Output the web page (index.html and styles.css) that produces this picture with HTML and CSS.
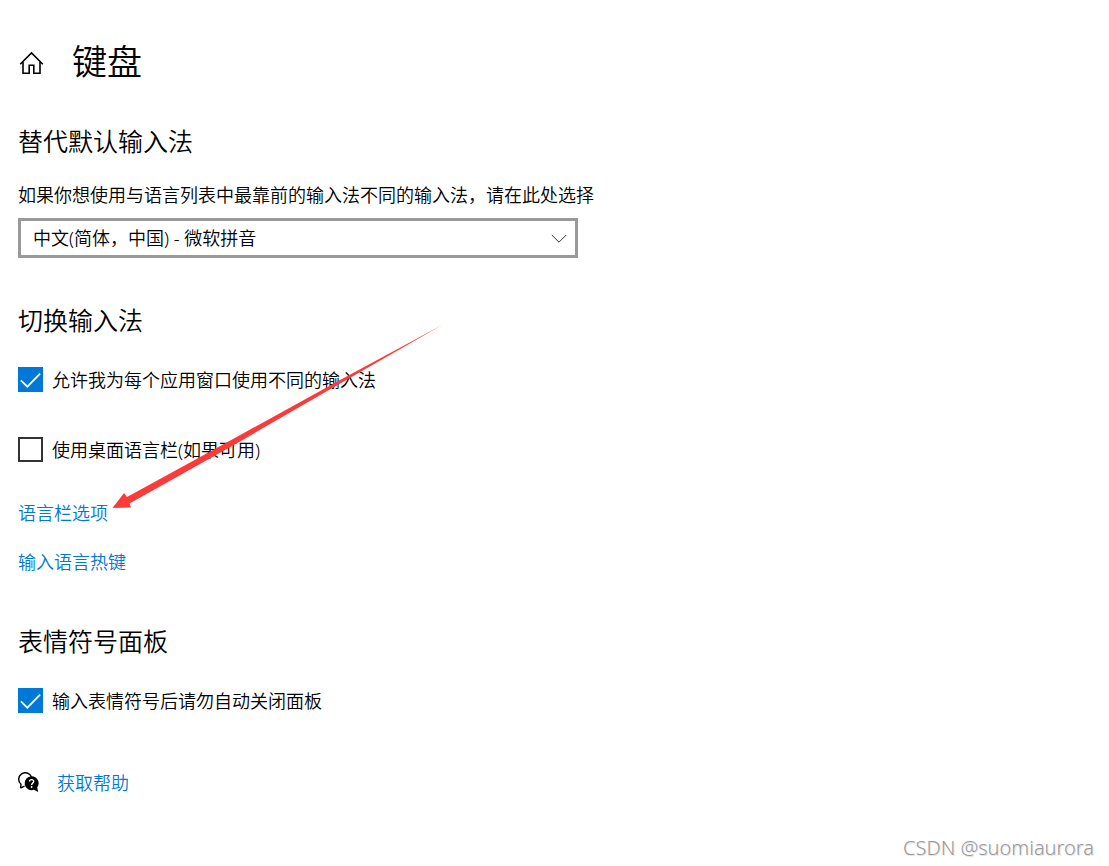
FILE: index.html
```html
<!DOCTYPE html>
<html lang="zh-CN">
<head>
    <meta charset="UTF-8">
    <meta name="viewport" content="width=device-width, initial-scale=1.0">
    <title>键盘</title>
    <link rel="stylesheet" href="styles.css">
</head>
<body>
    <header class="page-header">
        <a class="home" href="#" aria-label="主页">
            <svg width="26" height="26" viewBox="0 0 26 26" fill="none" stroke="#000" stroke-width="1.6">
                <path d="M2.2 15.200 13.500 4l11.300 11.200"/>
                <path d="M5 13v11.200h6.200v-8h4.600v8H22V13"/>
            </svg>
        </a>
        <h1>键盘</h1>
    </header>

    <main>
        <section>
            <h2>替代默认输入法</h2>
            <label class="description" for="ime">如果你想使用与语言列表中最靠前的输入法不同的输入法，请在此处选择</label>
            <div class="dropdown">
                <select id="ime">
                    <option>中文(简体，中国) - 微软拼音</option>
                </select>
                <svg class="chevron" width="16" height="10" viewBox="0 0 16 10" fill="none" stroke="#333">
                    <path d="M.8 1 8 8.200 15.200 1"/>
                </svg>
            </div>
        </section>

        <section class="switching">
            <h2>切换输入法</h2>
            <label class="check">
                <input type="checkbox" checked>
                <svg class="tick" viewBox="0 0 26 26" fill="none" stroke="#fff" stroke-width="1.8">
                    <path d="M3 14 9.700 20.500 23 7"/>
                </svg>
                <span>允许我为每个应用窗口使用不同的输入法</span>
            </label>
            <label class="check">
                <input type="checkbox">
                <svg class="tick" viewBox="0 0 26 26" fill="none" stroke="#fff" stroke-width="1.8">
                    <path d="M3 14 9.700 20.500 23 7"/>
                </svg>
                <span>使用桌面语言栏(如果可用)</span>
            </label>
            <div class="links">
                <a href="#">语言栏选项</a>
                <a href="#">输入语言热键</a>
            </div>
            <!-- 指向"语言栏选项"的箭头 -->
            <svg class="arrow" width="332" height="186" viewBox="0 0 332 186">
                <path d="M.5 184 12 169 15 173 121 115 229 55.500 331 .5 229 59 121 121.500 17.500 179.500 19 183.500Z" fill="#fb3b3a"/>
            </svg>
        </section>

        <section>
            <h2>表情符号面板</h2>
            <label class="check">
                <input type="checkbox" checked>
                <svg class="tick" viewBox="0 0 26 26" fill="none" stroke="#fff" stroke-width="1.8">
                    <path d="M3 14 9.700 20.500 23 7"/>
                </svg>
                <span>输入表情符号后请勿自动关闭面板</span>
            </label>
        </section>

        <div class="help">
            <svg width="22" height="22" viewBox="0 0 22 22">
                <path d="M2.500 16 3 12.300A6.600 6.600 0 1 1 13.500 5" fill="none" stroke="#000" stroke-width="1.400"/>
                <path d="M2.500 16 6.500 14.200" stroke="#000" stroke-width="1.400"/>
                <path d="M13.500 4.200a7 7 0 0 1 5.700 11.200l1 4.600-4.300-2.200A7 7 0 1 1 13.500 4.200Z" fill="#000"/>
                <path d="M11.500 9.600c0-2.600 4.200-2.600 4.200 0 0 1.500-2.100 1.600-2.100 3.300" fill="none" stroke="#fff" stroke-width="1.400"/>
                <circle cx="13.600" cy="15" r=".9" fill="#fff"/>
            </svg>
            <a href="#">获取帮助</a>
        </div>
    </main>

    <footer class="watermark">CSDN @suomiaurora</footer>
</body>
</html>
```
FILE: styles.css
```css
* {
    box-sizing: border-box;
}
body {
    display: flex;
    flex-direction: column;
    min-height: 100vh;
    margin: 0;
    padding: 36px 15px 4px 18px;
    background: #fff;
    color: #000;
    font-family: "Noto Sans", "Noto Sans CJK SC", sans-serif;
    font-size: 18px;
    font-weight: 350;
    line-height: 24px;
}
h1, h2 {
    margin: 0;
    font-weight: 350;
}
h1 {
    font-size: 35px;
    line-height: 52px;
}
h2 {
    margin-bottom: 30px;
    font-size: 25px;
    line-height: 34px;
}
a {
    color: #0078d7;
    text-decoration: none;
}
.page-header {
    display: flex;
    align-items: center;
    gap: 28px;
    margin-bottom: 36px;
}
.home {
    display: flex;
}
section {
    display: flex;
    flex-direction: column;
    align-items: flex-start;
    margin-bottom: 45px;
}
.description {
    margin: -5px 0 11px;
}
.dropdown {
    position: relative;
    width: 100%;
    max-width: 560px;
}
.dropdown select {
    appearance: none;
    width: 100%;
    height: 40px;
    padding: 0 36px 0 12px;
    border: 3px solid #999;
    border-radius: 0;
    background: #fff;
    color: #000;
    font: inherit;
}
.chevron {
    position: absolute;
    top: 16px;
    right: 11px;
    pointer-events: none;
}
.switching {
    position: relative;
    margin-bottom: 50px;
}
.check {
    display: grid;
    grid-template-columns: 25px auto;
    column-gap: 9px;
    align-items: center;
}
.check + .check {
    margin-top: 45px;
}
.check input {
    grid-area: 1 / 1;
    appearance: none;
    width: 25px;
    height: 25px;
    margin: 0;
    border: 2px solid #333;
    background: #fff;
}
.check input:checked {
    border: none;
    background: #0078d7;
}
.tick {
    grid-area: 1 / 1;
    width: 25px;
    height: 25px;
    z-index: 1;
    pointer-events: none;
}
.links {
    display: flex;
    flex-direction: column;
    gap: 25px;
    margin-top: 39px;
}
.arrow {
    position: absolute;
    top: 21px;
    left: 94px;
    pointer-events: none;
    z-index: 2;
}
.help {
    display: flex;
    align-items: center;
    gap: 17px;
    margin-top: 58px;
}
.watermark {
    margin-top: auto;
    color: #999;
    font-size: 20px;
    font-weight: 300;
    line-height: 28px;
    text-align: right;
    text-shadow: 1px 1px 1px #ddd;
}
```
